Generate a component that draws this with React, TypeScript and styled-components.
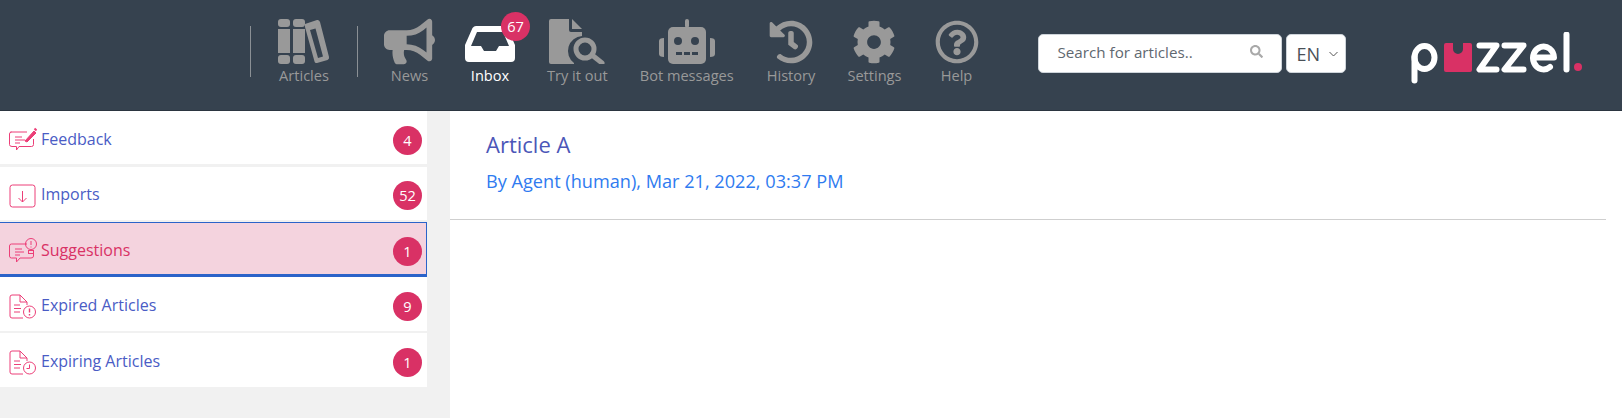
import React from "react";
import styled, { createGlobalStyle } from "styled-components";
import { FaBullhorn, FaCog, FaHistory, FaRegQuestionCircle, FaSearch } from "react-icons/fa";

const Global = createGlobalStyle`
  html, body { margin: 0; padding: 0; height: 100%; background: #f1f1f1; }
  * { box-sizing: border-box; }
  body { font-family: "Open Sans", "Liberation Sans", sans-serif; overflow: hidden; }
`;

const Page = styled.div`
  width: 1622px;
  height: 418px;
  display: flex;
  flex-direction: column;
`;

const Header = styled.header`
  height: 111px;
  flex: none;
  background: #36424f;
  border-bottom: 1px solid #2b3540;
  display: flex;
  align-items: flex-start;
  padding: 19px 0 0 250px;
`;

const Nav = styled.nav`
  display: flex;
  align-items: flex-start;
  flex: none;
`;

const Separator = styled.div`
  width: 1px;
  height: 51px;
  margin-top: 7px;
  background: #8b9095;
  flex: none;
`;

const NavItem = styled.div<{ $active?: boolean; $pad?: number; $before?: number }>`
  position: relative;
  display: flex;
  flex-direction: column;
  align-items: center;
  padding: 0 ${(p) => p.$pad ?? 16}px;
  margin-left: ${(p) => p.$before ?? 0}px;
  color: ${(p) => (p.$active ? "#ffffff" : "#999999")};
`;

const IconBox = styled.div`
  height: 45px;
  display: flex;
  align-items: center;
  justify-content: center;
`;

const NavLabel = styled.span`
  display: block;
  margin-top: 1px;
  font-size: 14.6px;
  line-height: 20px;
  white-space: nowrap;
`;

const NavBadge = styled.span`
  position: absolute;
  top: -7px;
  left: 52px;
  width: 29px;
  height: 29px;
  border-radius: 50%;
  background: #d93165;
  color: #fff;
  font-size: 14.6px;
  line-height: 29px;
  text-align: center;
`;

const SearchBox = styled.div`
  width: 244px;
  height: 39px;
  flex: none;
  margin: 15px 0 0 43px;
  background: #fff;
  border: 1px solid #ced4da;
  border-radius: 5px;
  display: flex;
  align-items: center;
  justify-content: space-between;
  padding: 0 18px 4px 19px;
  font-size: 15.2px;
  color: #5f6870;
  svg { color: #a9a9a9; }
`;

const LangSelect = styled.div`
  width: 60px;
  height: 39px;
  flex: none;
  margin: 15px 0 0 4px;
  background: #fff;
  border: 1px solid #ced4da;
  border-radius: 5px;
  display: flex;
  align-items: center;
  padding-left: 10px;
  gap: 9px;
  font-size: 18px;
  color: #495057;
`;

const LogoWrap = styled.div`
  margin: 13px 0 0 65px;
  line-height: 0;
  flex: none;
`;

const Body = styled.div`
  flex: 1;
  display: flex;
  min-height: 0;
`;

const Sidebar = styled.aside`
  width: 450px;
  flex: none;
  padding-right: 23px;
  display: flex;
  flex-direction: column;
`;

const Row = styled.div<{ $active?: boolean; $h: number; $gap: number; $top: number }>`
  height: ${(p) => p.$h}px;
  margin-bottom: ${(p) => p.$gap}px;
  background: ${(p) => (p.$active ? "#f4d3de" : "#fff")};
  color: ${(p) => (p.$active ? "#d93165" : "#4a5cc5")};
  border: ${(p) => (p.$active ? "1px solid #2b63c9" : "none")};
  border-bottom-width: ${(p) => (p.$active ? "3px" : "0")};
  border-left: none;
  display: flex;
  align-items: center;
  padding: ${(p) => p.$top}px ${(p) => (p.$active ? 4 : 5)}px 0 9px;
  font-size: 16px;
`;

const RowIcon = styled.span`
  width: 32px;
  flex: none;
  display: flex;
  line-height: 0;
`;

const RowLabel = styled.span`
  flex: 1;
  margin-bottom: 3px;
`;

const Count = styled.span`
  width: 29px;
  height: 29px;
  border-radius: 50%;
  background: #d93165;
  color: #fff;
  font-size: 14.6px;
  line-height: 29px;
  text-align: center;
  flex: none;
`;

const Main = styled.main`
  flex: 1;
  background: #fff;
  padding-right: 16px;
`;

const ArticleHead = styled.div`
  height: 109px;
  border-bottom: 1px solid #cfcfcf;
  padding: 19px 0 0 36px;
`;

const Title = styled.div`
  font-size: 22px;
  line-height: 28px;
  color: #4c56b8;
`;

const Byline = styled.div`
  margin-top: 11px;
  font-size: 18.15px;
  line-height: 24px;
  color: #2f7bf0;
`;

const Books = () => (
  <svg width="52" height="45" viewBox="0 0 52 45" fill="#999">
    <rect x="0" y="0" width="12" height="8" rx="3" />
    <rect x="0" y="10" width="12" height="24" />
    <rect x="0" y="36" width="12" height="9" rx="3" />
    <rect x="15" y="0" width="12" height="8" rx="3" />
    <rect x="15" y="10" width="12" height="24" />
    <rect x="15" y="36" width="12" height="9" rx="3" />
    <path fillRule="evenodd" d="M27 5 L39 1 Q41 .5 42 3 L51 38 Q51.500 40 49.500 41 L39 44 Q37 44.500 36.500 42.500 L27 8 Z M32 11 L40 39 L45 37.500 L37.500 9.500 Z" />
  </svg>
);

const Tray = () => (
  <svg width="50" height="36" viewBox="0 0 50 36" fill="#fff" style={{ marginTop: 5 }}>
    <path fillRule="evenodd" d="M11 0 H39 Q41 0 42.500 2 L50 19 V32 Q50 36 46 36 H4 Q0 36 0 32 V19 L7.500 2 Q9 0 11 0 Z M12 6 L6 20 H16 L19 25 H31 L34 20 H44 L38 6 Z" />
  </svg>
);

const TryIt = () => (
  <svg width="56" height="45" viewBox="0 0 56 45" fill="#999">
    <path d="M0 2 Q0 0 2 0 H20 V11 Q20 13 22 13 H33 V17 A15 15 0 0 0 25 44 V45 H2 Q0 45 0 43 Z" />
    <path d="M23 0 L33 10 H23 Z" />
    <circle cx="36" cy="30" r="9" fill="none" stroke="#999" strokeWidth="5" />
    <path d="M43 36 L53 44" stroke="#999" strokeWidth="5" strokeLinecap="round" />
  </svg>
);

const Robot = () => (
  <svg width="56" height="45" viewBox="0 0 56 45" fill="#999">
    <rect x="26" y="0" width="4" height="9" rx="2" />
    <rect x="9" y="8" width="38" height="37" rx="5" />
    <path d="M0 22 Q0 19 5 19 V38 Q0 38 0 35 Z" />
    <path d="M56 22 Q56 19 51 19 V38 Q56 38 56 35 Z" />
    <circle cx="19" cy="22" r="4" fill="#36424f" />
    <circle cx="36" cy="22" r="4" fill="#36424f" />
    <rect x="17" y="33" width="6" height="3" fill="#36424f" />
    <rect x="25" y="33" width="6" height="3" fill="#36424f" />
    <rect x="33" y="33" width="6" height="3" fill="#36424f" />
  </svg>
);

const Logo = () => (
  <svg width="172" height="52" viewBox="0 0 172 52" aria-label="puzzel">
    <g fill="none" stroke="#fff" strokeWidth="6" strokeLinecap="round" strokeLinejoin="round">
      <path d="M3.500 48.500 V25" />
      <ellipse cx="13.500" cy="25.500" rx="10" ry="11.500" />
      <path d="M68.500 13.500 H85.500 L68.500 37.500 H85.500" />
      <path d="M93.500 13.500 H112.500 L93.500 37.500 H112.500" />
      <path d="M122.500 25.500 H143 A10.500 11.500 0 1 0 139 35" />
      <path d="M155.500 2.500 V37.500" />
    </g>
    <path fill="#d93165" d="M33 13 Q33 11 35 11 H42 V17 A5 5 0 0 0 52 17 V11 H59 Q61 11 61 13 V38 Q61 40 59 40 H35 Q33 40 33 38 Z" />
    <circle cx="167" cy="35" r="4" fill="#d93165" />
  </svg>
);

const pink = "#ec3f78";
const Chat = ({ children }: { children?: React.ReactNode }) => (
  <svg width="28" height="26" viewBox="0 0 28 26" fill="none" stroke={pink} strokeWidth="1">
    <path d="M1.500 5 H18 M24.500 12 V17.500 Q24.500 19.500 22.500 19.500 H10 L7.500 23 V19.500 H3 Q.5 19.500 .5 17.500 V7 Q.5 5 2.500 5" />
    <path d="M6 10 H13 M6 13 H16 M6 16 H11" />
    {children}
  </svg>
);

const FeedbackIcon = () => (
  <Chat>
    <path d="M16 14 L25 4 L27 6 L18 15 Z" fill={pink} />
    <path d="M25.500 1.500 L27.500 3.500" strokeWidth="2" />
  </Chat>
);

const ImportIcon = () => (
  <svg width="27" height="24" viewBox="0 0 27 24" fill="none" stroke={pink} strokeWidth="1">
    <rect x="1" y="1" width="25" height="22" rx="2.500" />
    <path d="M13.500 7 V18 M9.500 14 L13.500 18 L17.500 14" />
  </svg>
);

const SuggestIcon = () => (
  <svg width="28" height="26" viewBox="0 0 28 26" fill="none" stroke={pink} strokeWidth="1" style={{ marginTop: -3 }}>
    <path d="M18 7 H2.500 Q.5 7 .5 9 V19 Q.5 21 2.500 21 H7.500 V25 L11 21 H22 Q24.500 21 24.500 19 V17" />
    <path d="M6 12 H13 M6 15 H15 M6 18 H11" />
    <circle cx="22" cy="7" r="5.500" />
    <path d="M22 4 V8 M22 9.500 V10.500" />
    <rect x="19.500" y="13.500" width="5" height="3" />
  </svg>
);

const Doc = ({ children }: { children?: React.ReactNode }) => (
  <svg width="28" height="25" viewBox="0 0 28 25" fill="none" stroke={pink} strokeWidth="1">
    <path d="M14 24 H3 Q1 24 1 22 V3 Q1 1 3 1 H11 L18 8 V11 M11 1 V8 H18" />
    <path d="M5 11 H11 M5 14.500 H12 M5 18 H11" />
    <circle cx="20.500" cy="18" r="6" />
    {children}
  </svg>
);

const ExpiredIcon = () => (
  <Doc>
    <path d="M20.500 14.500 V18.500 M20.500 20 V21.500" strokeWidth="1.400" />
  </Doc>
);

const ExpiringIcon = () => (
  <Doc>
    <path d="M20.500 14.500 V18.500 H17.500" />
  </Doc>
);

const rows = [
  { label: "Feedback", count: 4, icon: <FeedbackIcon />, h: 53, gap: 3, top: 5 },
  { label: "Imports", count: 52, icon: <ImportIcon />, h: 53, gap: 2, top: 4 },
  { label: "Suggestions", count: 1, icon: <SuggestIcon />, active: true, h: 55, gap: 0, top: 5 },
  { label: "Expired Articles", count: 9, icon: <ExpiredIcon />, h: 54, gap: 2, top: 4 },
  { label: "Expiring Articles", count: 1, icon: <ExpiringIcon />, h: 54, gap: 0, top: 4 },
];

export default function App() {
  return (
    <Page>
      <Global />
      <Header>
        <Nav>
          <Separator />
          <NavItem $pad={27}>
            <IconBox><Books /></IconBox>
            <NavLabel>Articles</NavLabel>
          </NavItem>
          <Separator />
          <NavItem $before={10}>
            <IconBox><FaBullhorn size={51} /></IconBox>
            <NavLabel>News</NavLabel>
          </NavItem>
          <NavItem $active $before={-2}>
            <IconBox><Tray /></IconBox>
            <NavLabel>Inbox</NavLabel>
            <NavBadge>67</NavBadge>
          </NavItem>
          <NavItem>
            <IconBox><TryIt /></IconBox>
            <NavLabel>Try it out</NavLabel>
          </NavItem>
          <NavItem>
            <IconBox><Robot /></IconBox>
            <NavLabel>Bot messages</NavLabel>
          </NavItem>
          <NavItem $before={1}>
            <IconBox><FaHistory size={44} /></IconBox>
            <NavLabel>History</NavLabel>
          </NavItem>
          <NavItem>
            <IconBox><FaCog size={44} /></IconBox>
            <NavLabel>Settings</NavLabel>
          </NavItem>
          <NavItem $before={1}>
            <IconBox><FaRegQuestionCircle size={44} /></IconBox>
            <NavLabel>Help</NavLabel>
          </NavItem>
        </Nav>
        <SearchBox>
          <span>Search for articles..</span>
          <FaSearch size={13} />
        </SearchBox>
        <LangSelect>
          <span>EN</span>
          <svg width="9" height="6" viewBox="0 0 9 6" fill="none" stroke="#555" strokeWidth="1">
            <path d="M.5 1 L4.500 5 L8.500 1" />
          </svg>
        </LangSelect>
        <LogoWrap><Logo /></LogoWrap>
      </Header>
      <Body>
        <Sidebar>
          {rows.map((r) => (
            <Row key={r.label} $active={r.active} $h={r.h} $gap={r.gap} $top={r.top}>
              <RowIcon>{r.icon}</RowIcon>
              <RowLabel>{r.label}</RowLabel>
              <Count>{r.count}</Count>
            </Row>
          ))}
        </Sidebar>
        <Main>
          <ArticleHead>
            <Title>Article A</Title>
            <Byline>By Agent (human), Mar 21, 2022, 03:37 PM</Byline>
          </ArticleHead>
        </Main>
      </Body>
    </Page>
  );
}
